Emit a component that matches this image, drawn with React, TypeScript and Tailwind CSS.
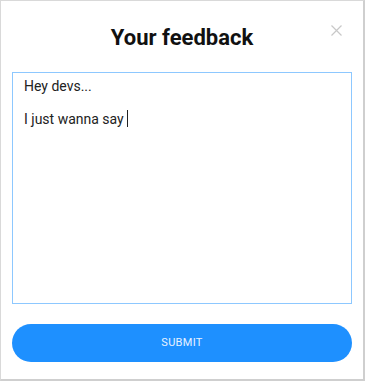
import React from "react";

export default function App() {
  return (
    <div className="w-[366px] h-[382px] bg-white" style={{ fontFamily: "Roboto, 'Noto Sans', sans-serif" }}>
      <div className="w-[365px] h-[381px] border border-[#d9d9d9] border-r-2 border-b-2 border-r-[#cfcfcf] border-b-[#cfcfcf] flex flex-col">
        <div className="relative h-[71px] flex items-center justify-center">
          <h1 className="text-[22px] font-bold text-[#111] mt-[1px]">Your feedback</h1>
          <button className="absolute right-[21px] top-[24px] w-[11px] h-[11px] text-[#c8c8c8]">
            <svg viewBox="0 0 11 11" width="11" height="11" fill="none" stroke="currentColor" strokeWidth="1.2">
              <path d="M0.5 0.5 L10.5 10.5 M10.5 0.5 L0.5 10.5" />
            </svg>
          </button>
        </div>
        <div className="px-[11px]">
          <div className="h-[232px] border border-[#8dc8ff] pl-[11px] pt-[5px] text-[14px] leading-[16px] text-[#222]">
            <p>Hey devs...</p>
            <p className="h-[16px]"></p>
            <p className="flex items-center">I just wanna say<span className="ml-[3px] inline-block w-[1px] h-[17px] bg-[#222]"></span></p>
          </div>
        </div>
        <div className="px-[11px] pt-[20px]">
          <button className="w-full h-[38px] rounded-full bg-[#1e90ff] text-[#e8f2ff] text-[11px] tracking-[0.3px]">SUBMIT</button>
        </div>
      </div>
    </div>
  );
}
